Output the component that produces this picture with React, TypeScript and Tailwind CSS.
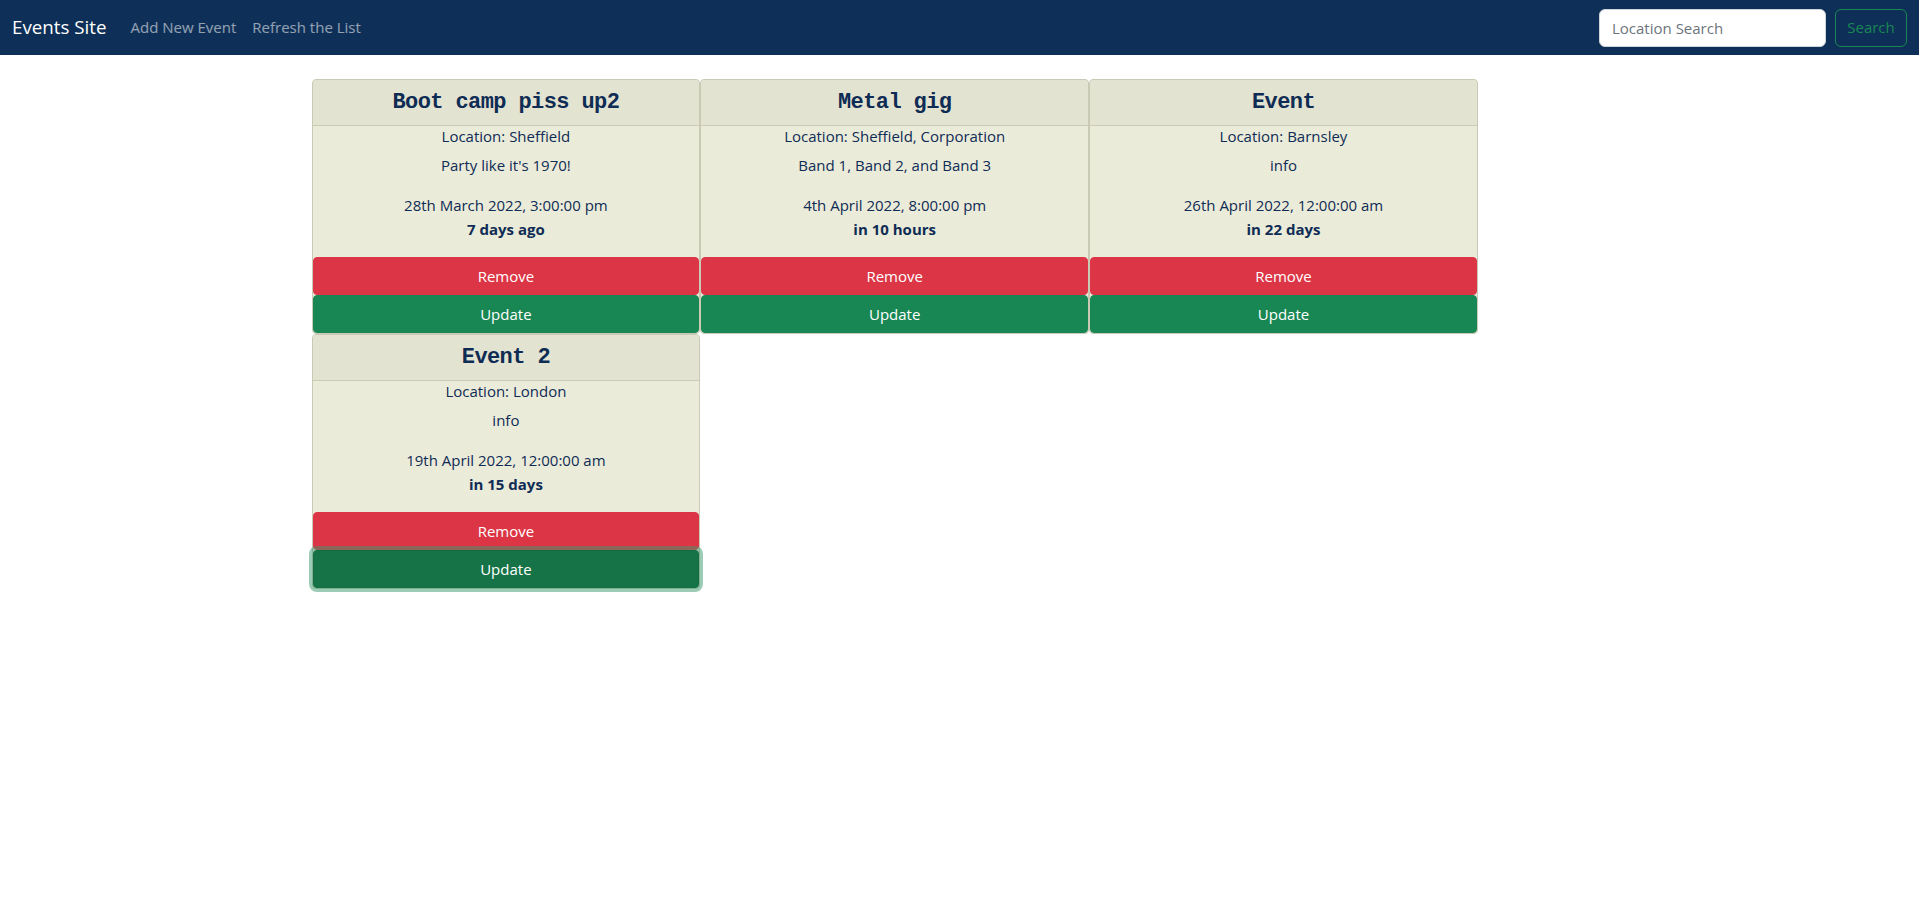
import React from 'react';

interface EventItem {
  id: string;
  title: string;
  location: string;
  info: string;
  date: string;
  relative: string;
}

const EVENTS: EventItem[] = [
  {
    id: '1',
    title: 'Boot camp piss up2',
    location: 'Sheffield',
    info: "Party like it's 1970!",
    date: '28th March 2022, 3:00:00 pm',
    relative: '7 days ago',
  },
  {
    id: '2',
    title: 'Metal gig',
    location: 'Sheffield, Corporation',
    info: 'Band 1, Band 2, and Band 3',
    date: '4th April 2022, 8:00:00 pm',
    relative: 'in 10 hours',
  },
  {
    id: '3',
    title: 'Event',
    location: 'Barnsley',
    info: 'info',
    date: '26th April 2022, 12:00:00 am',
    relative: 'in 22 days',
  },
  {
    id: '4',
    title: 'Event 2',
    location: 'London',
    info: 'info',
    date: '19th April 2022, 12:00:00 am',
    relative: 'in 15 days',
  },
];

const SANS = "font-['Open_Sans','Noto_Sans',sans-serif]";

function Navbar() {
  return (
    <nav className="flex h-[55px] items-center justify-between bg-[#0e2f57] px-3">
      <div className="flex items-center">
        <a className="mr-4 text-[18.75px] text-white">Events Site</a>
        <a className="px-2 text-[15px] text-white/55">Add New Event</a>
        <a className="px-2 text-[15px] text-white/55">Refresh the List</a>
      </div>
      <div className="flex items-center gap-[9px]">
        <input
          type="search"
          placeholder="Location Search"
          className="h-[38px] w-[227px] rounded-md border border-[#ced4da] bg-white px-3 text-[15px] text-[#212529] placeholder:text-[#6c757d] outline-none"
        />
        <button className="h-[38px] w-[72px] rounded-md border border-[#198754] text-[15px] text-[#198754]">
          Search
        </button>
      </div>
    </nav>
  );
}

function EventCard({ event, focused }: { event: EventItem; focused?: boolean }) {
  return (
    <div className="flex w-[388.8px] flex-col rounded border border-[#c9c9b5] bg-[#ebebda] text-[#0f2c54]">
      {/* Header */}
      <div className="flex h-[46px] items-center justify-center rounded-t border-b border-[#cbcbb7] bg-[#e3e3d1]">
        <h3 className="font-['Liberation_Mono','Courier_New',monospace] text-[22px] font-bold tracking-[-0.6px] text-[#0f2c54]">
          {event.title}
        </h3>
      </div>

      {/* Body */}
      <div className="flex h-[131px] flex-col items-center text-[15px] leading-6">
        <p className="mt-[-2px] mb-[5px]">Location: {event.location}</p>
        <p className="mb-[16px]">{event.info}</p>
        <p>{event.date}</p>
        <p className="font-bold">{event.relative}</p>
      </div>

      {/* Actions */}
      <button className="h-[38px] w-full rounded border border-[#dc3545] bg-[#dc3545] text-[15px] text-white">
        Remove
      </button>
      <button
        className={`h-[38px] w-full rounded border text-[15px] text-white ${
          focused
            ? 'border-[#146c43] bg-[#157347] shadow-[0_0_0_4px_rgba(60,153,110,0.5)]'
            : 'border-[#198754] bg-[#198754]'
        }`}
      >
        Update
      </button>
    </div>
  );
}

export default function App() {
  return (
    <div className={`min-h-screen bg-white ${SANS}`}>
      <Navbar />
      <main className="mx-auto mt-6 w-[1296px]">
        <div className="flex flex-wrap">
          {EVENTS.map((event, i) => (
            <EventCard key={event.id} event={event} focused={i === EVENTS.length - 1} />
          ))}
        </div>
      </main>
    </div>
  );
}
